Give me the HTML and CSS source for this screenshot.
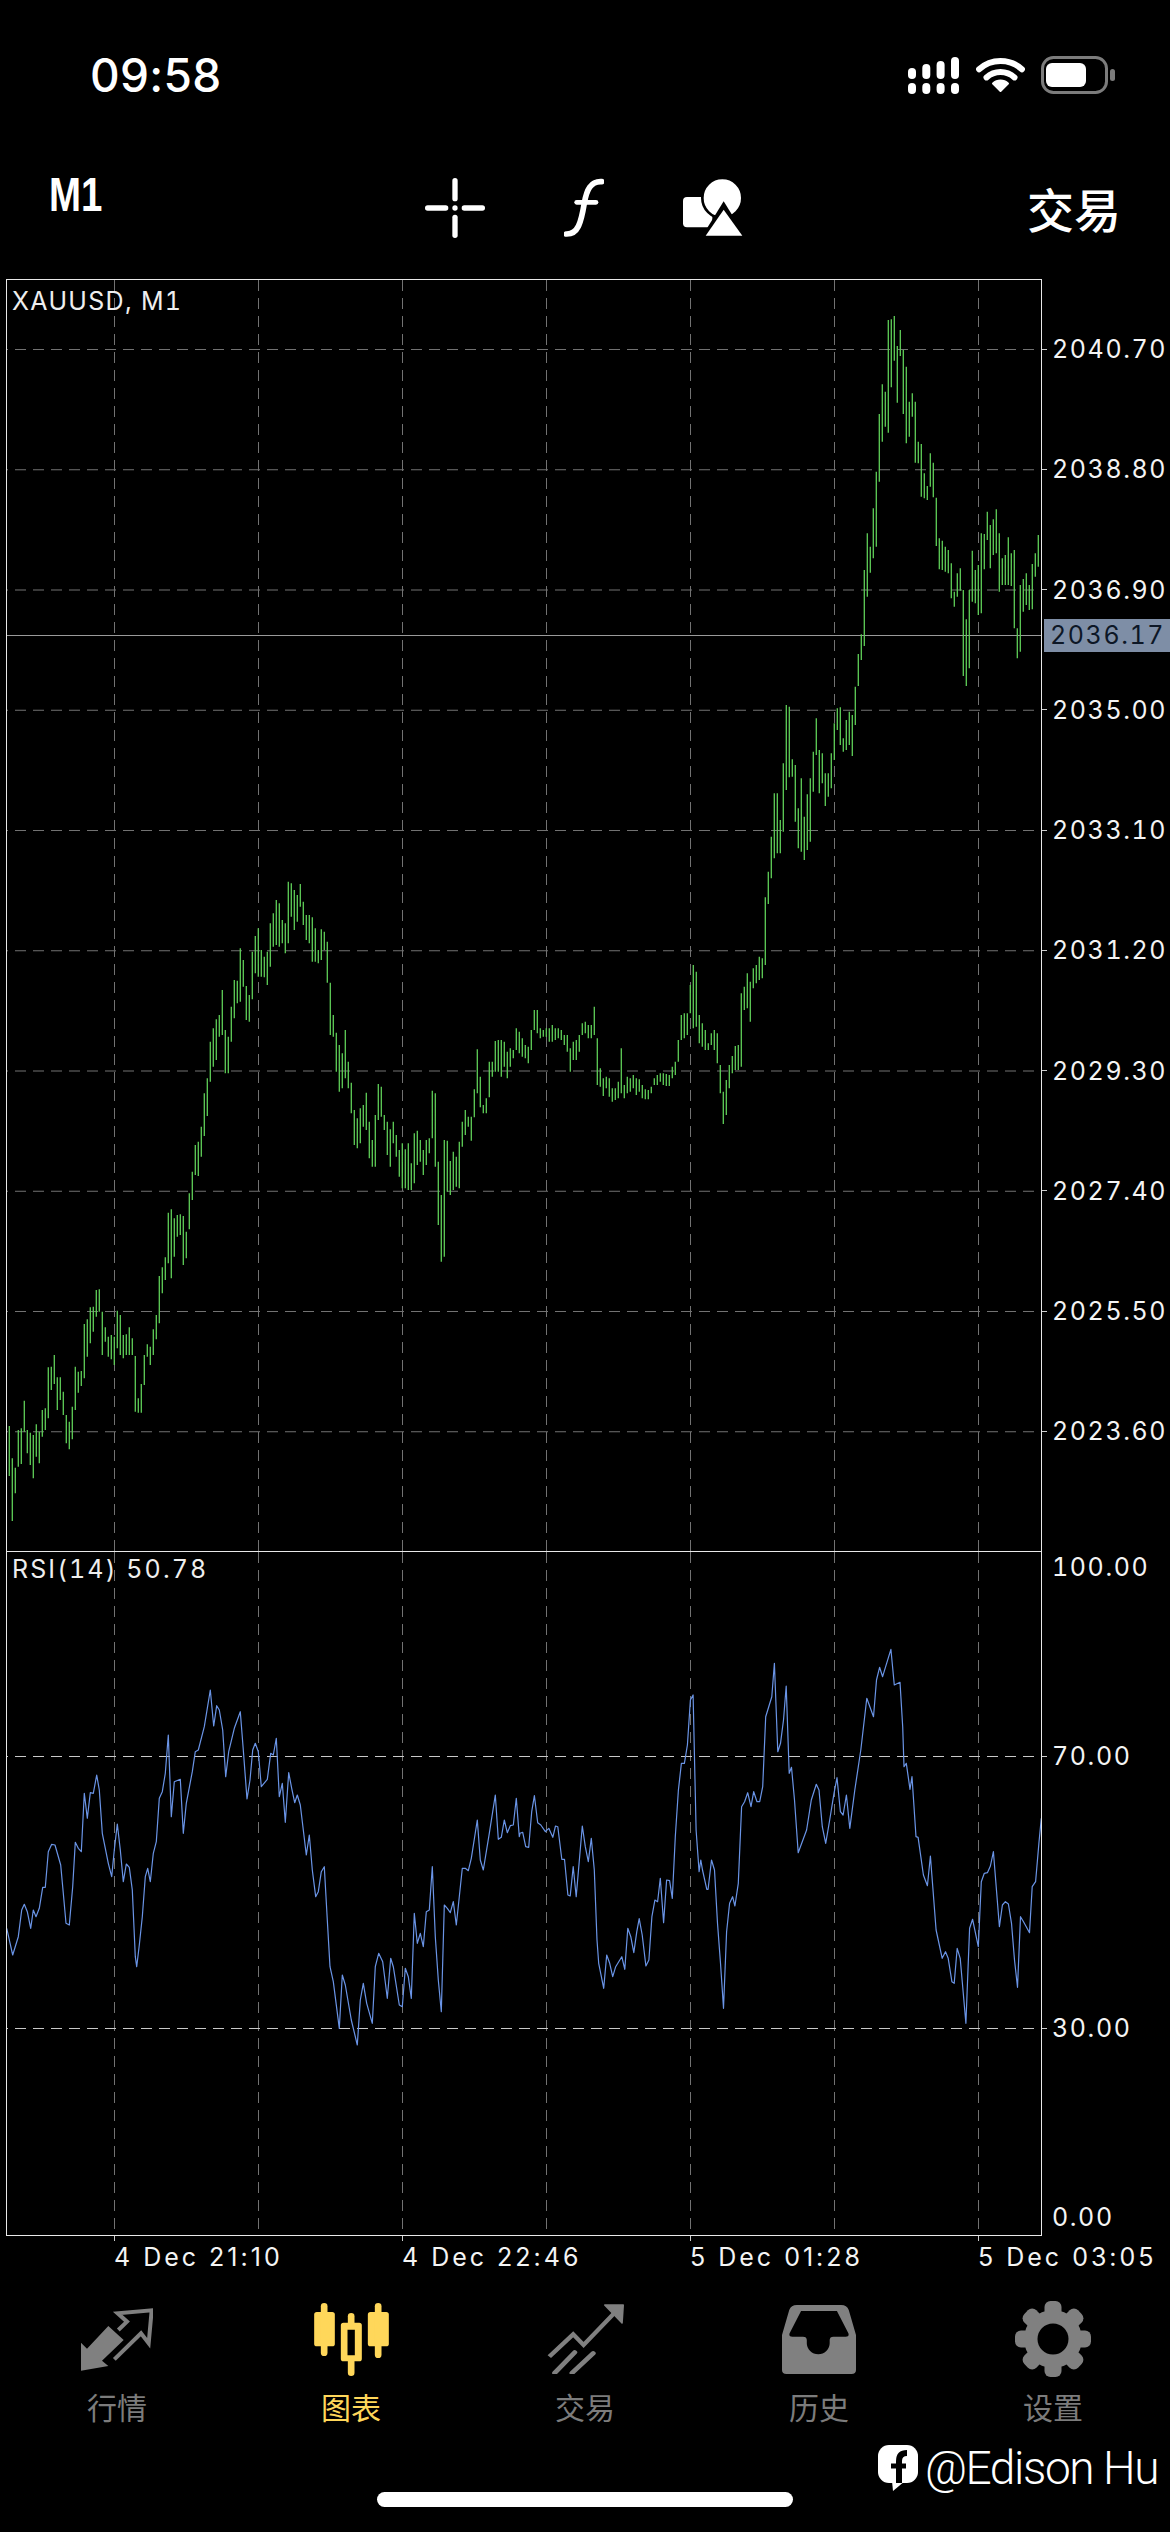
FILE: index.html
```html
<!DOCTYPE html>
<html>
<head>
    <title>XAUUSD, M1</title>
    <link rel="stylesheet" href="styles.css">
</head>
<body>
    <div class="status">
        <div class="time">09:58</div>
        <div class="status-icons">
            <svg width="52" height="37" viewBox="0 0 52 37" fill="#fff">
                <rect x="0" y="11" width="8" height="11" rx="4"/>
                <rect x="14.3" y="7" width="8" height="15" rx="4"/>
                <rect x="28.6" y="4" width="8" height="18" rx="4"/>
                <rect x="43" y="0" width="8" height="22" rx="4"/>
                <rect x="0" y="26" width="8" height="11" rx="4"/>
                <rect x="14.3" y="26" width="8" height="11" rx="4"/>
                <rect x="28.6" y="26" width="8" height="11" rx="4"/>
                <rect x="43" y="26" width="8" height="11" rx="4"/>
            </svg>
            <svg width="49" height="36" viewBox="0 0 49 36" fill="none" stroke="#fff">
                <path d="M3.1 12.2A32 32 0 0 1 45.9 12.2" stroke-width="6" stroke-linecap="round"/>
                <path d="M10.5 20.4A21 21 0 0 1 38.5 20.4" stroke-width="6" stroke-linecap="round"/>
                <path d="M24.5 34L17 26.5A11 11 0 0 1 32 26.5Z" fill="#fff" stroke-width="2" stroke-linejoin="round"/>
            </svg>
            <svg width="74" height="38" viewBox="0 0 74 38">
                <rect x="1.5" y="1.5" width="64" height="35" rx="11" fill="none" stroke="#7c7c7c" stroke-width="3"/>
                <rect x="5" y="7" width="40" height="24" rx="6" fill="#fff"/>
                <rect x="69" y="13" width="5" height="12" rx="2.5" fill="#7c7c7c"/>
            </svg>
        </div>
    </div>

    <div class="toolbar">
        <div class="period"><span>M1</span></div>
        <div class="tools">
            <svg width="60" height="60" viewBox="75 35 180 180" fill="#fff">
                <rect x="75" y="117" width="70" height="16" rx="8"/>
                <rect x="185" y="117" width="70" height="16" rx="8"/>
                <rect x="157" y="35" width="16" height="70" rx="8"/>
                <rect x="157" y="145" width="16" height="70" rx="8"/>
                <circle cx="165" cy="125" r="8"/>
            </svg>
            <svg width="40" height="60" viewBox="490 35 120 180" fill="none" stroke="#fff" stroke-linecap="round">
                <path d="M603 46C570 44 558 70 551 110C541 170 532 204 497 203" stroke-width="17"/>
                <path d="M528 108H586" stroke-width="14"/>
            </svg>
            <svg width="60" height="60" viewBox="850 35 180 180" fill="#fff">
                <rect x="850" y="92" width="88" height="91" rx="12"/>
                <circle cx="968" cy="95" r="60" stroke="#000" stroke-width="8"/>
                <path d="M972 105L1040 215H904Z" fill="#000"/>
                <path d="M972 130L1028 208H918Z"/>
            </svg>
        </div>
        <div class="trade">交易</div>
    </div>

    <div class="chart">
        <div class="panes">
            <div class="pane pane-main">
                <svg id="price" class="plot" viewBox="7 280 1034 1271"></svg>
                <div class="pane-title title-main">XAUUSD, M1</div>
            </div>
            <div class="pane pane-rsi">
                <svg id="rsi" class="plot" viewBox="7 1552 1034 683"></svg>
                <div class="pane-title title-rsi">RSI(14) 50.78</div>
            </div>
        </div>
        <div class="axis">
            <div class="axis-main">
                <div class="level">2040.70</div>
                <div class="level">2038.80</div>
                <div class="level">2036.90</div>
                <div class="level">2035.00</div>
                <div class="level">2033.10</div>
                <div class="level">2031.20</div>
                <div class="level">2029.30</div>
                <div class="level">2027.40</div>
                <div class="level">2025.50</div>
                <div class="level">2023.60</div>
                <div class="price-tag">2036.17</div>
            </div>
            <div class="axis-rsi">
                <div class="level no-tick">100.00</div>
                <div class="level rsi-70">70.00</div>
                <div class="level rsi-30">30.00</div>
                <div class="level no-tick rsi-0">0.00</div>
            </div>
        </div>
    </div>

    <div class="time-axis">
        <div class="stamp">4 Dec 21:10</div>
        <div class="stamp">4 Dec 22:46</div>
        <div class="stamp">5 Dec 01:28</div>
        <div class="stamp">5 Dec 03:05</div>
    </div>

    <div class="tabs">
        <div class="tab">
            <div class="tab-icon">
                <svg width="72" height="63" viewBox="240 325 216 187">
                    <path d="M240 428L258 446L322 378L368 420L303 482L322 498L240 512Z" fill="#808080"/>
                    <path d="M340 478L420 400L443 430L452 331L350 340L378 365L352 390" fill="none" stroke="#808080" stroke-width="12"/>
                </svg>
            </div>
            <div class="tab-label">行情</div>
        </div>
        <div class="tab active">
            <div class="tab-icon">
                <svg width="75" height="73" viewBox="940 308 224 219" fill="#ffd75a">
                    <rect x="940" y="335" width="62" height="103" rx="8"/>
                    <rect x="960" y="308" width="20" height="159" rx="10"/>
                    <rect x="1101" y="335" width="63" height="103" rx="8"/>
                    <rect x="1122" y="308" width="20" height="165" rx="10"/>
                    <path fill-rule="evenodd" d="M1028 367H1075Q1083 367 1083 375V475Q1083 483 1075 483H1061V517A10 10 0 0 1 1041 517V483H1028Q1020 483 1020 475V375Q1020 367 1028 367ZM1040 388V465H1062V388Z"/>
                    <rect x="1041" y="338" width="20" height="40" rx="10"/>
                </svg>
            </div>
            <div class="tab-label">图表</div>
        </div>
        <div class="tab">
            <div class="tab-icon">
                <svg width="77" height="70" viewBox="70 55 200 210" preserveAspectRatio="none">
                    <path d="M76 213L138 146L165 178L245 82" fill="none" stroke="#808080" stroke-width="12"/>
                    <path d="M220 58H268L265 112Z" fill="#808080" stroke="#808080" stroke-width="4" stroke-linejoin="round"/>
                    <path d="M90 262L142 200M135 262L190 203" fill="none" stroke="#808080" stroke-width="13" stroke-linecap="round"/>
                </svg>
            </div>
            <div class="tab-label">交易</div>
        </div>
        <div class="tab">
            <div class="tab-icon">
                <svg width="74" height="69" viewBox="683 60 194 207" preserveAspectRatio="none">
                    <path fill="#808080" fill-rule="evenodd" d="M722 60H838Q853 60 858 75L877 150V255Q877 267 865 267H695Q683 267 683 255V150L702 75Q707 60 722 60ZM733 78L703 145Q700 155 710 155H738Q748 155 748 165V175A30 33 0 0 0 808 175V165Q808 155 818 155H850Q860 155 857 145L827 78Z"/>
                </svg>
            </div>
            <div class="tab-label">历史</div>
        </div>
        <div class="tab">
            <div class="tab-icon">
                <svg width="76" height="76" viewBox="-38 -38 76 76" fill="#808080">
                    <rect x="-8.5" y="-38" width="17" height="16" rx="6"/>
                    <rect x="-8.5" y="-38" width="17" height="16" rx="6" transform="rotate(45)"/>
                    <rect x="-8.5" y="-38" width="17" height="16" rx="6" transform="rotate(90)"/>
                    <rect x="-8.5" y="-38" width="17" height="16" rx="6" transform="rotate(135)"/>
                    <rect x="-8.5" y="-38" width="17" height="16" rx="6" transform="rotate(180)"/>
                    <rect x="-8.5" y="-38" width="17" height="16" rx="6" transform="rotate(225)"/>
                    <rect x="-8.5" y="-38" width="17" height="16" rx="6" transform="rotate(270)"/>
                    <rect x="-8.5" y="-38" width="17" height="16" rx="6" transform="rotate(315)"/>
                    <circle r="29"/>
                    <circle r="15.5" fill="#000"/>
                </svg>
            </div>
            <div class="tab-label">设置</div>
        </div>
    </div>

    <div class="watermark">
        <svg width="41" height="46" viewBox="0 0 41 46">
            <rect x="0" y="0" width="40" height="38" rx="11" fill="#fff"/>
            <path d="M14 36L15 46L27 36Z" fill="#fff"/>
            <path d="M29 8Q21 8 21 16V38" fill="none" stroke="#000" stroke-width="6"/>
            <path d="M13 21H28" stroke="#000" stroke-width="5"/>
        </svg>
        <span>@Edison Hu</span>
    </div>
    <div class="home-bar"></div>

    <script src="chart.js"></script>
</body>
</html>
```

FILE: styles.css
```css
* {
    box-sizing: border-box;
}

body {
    margin: 0;
    width: 1170px;
    height: 2532px;
    overflow: hidden;
    background-color: #000;
    color: #fff;
    font-family: Inter, "Liberation Sans", sans-serif;
}

.status {
    height: 150px;
    display: flex;
    align-items: center;
    justify-content: space-between;
    padding: 0 55px 0 90px;
}

.time {
    font-size: 46px;
    font-weight: 500;
    letter-spacing: 0.3px;
}

.status-icons {
    display: flex;
    align-items: center;
    gap: 16px;
}

.toolbar {
    height: 129px;
    display: flex;
    align-items: center;
    padding: 0 49px 14px 49px;
}

.period {
    width: 376px;
    margin-bottom: 26px;
    font-family: "Liberation Sans", sans-serif;
    font-size: 48px;
    font-weight: bold;
}

.period span {
    display: inline-block;
    transform: scaleX(0.8);
    transform-origin: left;
}

.tools {
    display: flex;
    align-items: center;
    gap: 79px;
}

.trade {
    margin-left: auto;
    font-family: "Noto Sans CJK SC", sans-serif;
    font-size: 47px;
    font-weight: 500;
    line-height: 50px;
}

.chart {
    display: flex;
}

.panes {
    width: 1036px;
    margin-left: 6px;
    border: 1px solid #e8e8e8;
    border-bottom: none;
}

.pane {
    position: relative;
    border-bottom: 1px solid #e8e8e8;
    overflow: hidden;
}

.pane-main {
    height: 1272px;
}

.pane-rsi {
    height: 684px;
}

.plot {
    position: absolute;
    left: 0;
    top: 0;
    width: 1034px;
}

.pane-main .plot {
    height: 1271px;
}

.pane-rsi .plot {
    height: 683px;
}

.grid {
    stroke: #727272;
    stroke-width: 1;
    stroke-dasharray: 11 7;
}

.grid-bright {
    stroke: #c8c8c8;
    stroke-width: 1;
    stroke-dasharray: 11 7;
}

.last-price {
    stroke: #9a9a9a;
    stroke-width: 1;
}

.bars {
    stroke: #5fce58;
    stroke-width: 1.3;
}

.rsi-line {
    stroke: #6a94e6;
    stroke-width: 1.2;
    stroke-linejoin: round;
}

.pane-title {
    position: absolute;
    left: 5px;
    font-size: 25px;
    font-variant-numeric: tabular-nums;
    line-height: 30px;
    color: #eee;
}

.title-main {
    top: 6px;
    letter-spacing: 1.3px;
}

.title-rsi {
    top: 2px;
    letter-spacing: 2.1px;
}

.axis {
    flex: 1;
    font-size: 25px;
    font-variant-numeric: tabular-nums;
    letter-spacing: 1.6px;
    color: #f4f4f4;
}

.axis-main {
    position: relative;
    height: 1272px;
    padding-top: 10px;
}

.level {
    height: 120.25px;
    display: flex;
    align-items: center;
    gap: 5px;
}

.level::before {
    content: "";
    width: 5px;
    height: 1px;
    background-color: #ccc;
}

.level.no-tick::before {
    background-color: transparent;
}

.price-tag {
    position: absolute;
    left: 2px;
    top: 340px;
    width: 126px;
    height: 33px;
    padding-left: 6px;
    line-height: 33px;
    background-color: #7e8ea6;
    color: #0d1726;
}

.axis-rsi .level {
    height: 30px;
}

.axis-rsi {
    padding-top: 1px;
}

.rsi-70 {
    margin-top: 159px;
}

.rsi-30 {
    margin-top: 242px;
}

.rsi-0 {
    margin-top: 159px;
}

.time-axis {
    height: 65px;
    display: flex;
    padding-left: 114px;
    font-size: 25px;
    letter-spacing: 3px;
    color: #f4f4f4;
}

.stamp {
    flex: none;
    width: 288px;
    line-height: 30px;
}

.stamp:last-child {
    width: auto;
}

.stamp::before {
    content: "";
    display: block;
    width: 1px;
    height: 5px;
    margin-bottom: 1px;
    background-color: #ccc;
}

.tabs {
    display: flex;
}

.tab {
    flex: 1;
    display: flex;
    flex-direction: column;
    align-items: center;
    gap: 9px;
    color: #7c7c7c;
}

.tab.active {
    color: #ffd75a;
}

.tab-icon {
    height: 76px;
    display: flex;
    align-items: center;
}

.tab-label {
    font-family: "Noto Sans CJK SC", sans-serif;
    font-size: 30px;
    line-height: 40px;
}

.watermark {
    height: 48px;
    margin-top: 18px;
    display: flex;
    justify-content: flex-end;
    align-items: center;
    gap: 6px;
    padding-right: 12px;
    font-family: Roboto, sans-serif;
    font-size: 46px;
    font-weight: 300;
    letter-spacing: -1.4px;
}

.home-bar {
    width: 416px;
    height: 15px;
    margin: 0 auto;
    border-radius: 8px;
    background-color: #fff;
}
```

FILE: chart.js
```js
// traced from the chart: [first bar, y of the top of the crop, top, bottom, top, bottom...]
// values are in 1/3 px
const barRows = [
    [0, 1240, [558,708, 655,843, 683,760, 570,680, 565,672, 482,575, 570,640, 578,675, 585,715, 553,650, 575,670, 510,590, 505,570,
        382,535, 380,450, 345,432, 412,510, 412,480, 455,525, 525,610, 545,628, 500,598, 380,510, 395,458, 393,438, 252,415, 238,350,
        202,310, 200,275, 150,230, 148,215, 215,345, 262,305, 290,350, 285,358, 290,375, 212,325, 225,345, 285,355, 283,345, 262,345,
        295,345, 348,515, 475,518, 432,518, 345,435, 313,350, 320,375, 268,345, 225,298, 108,250, 82,160, 52,120]],
    [53, 860, [1058,1210, 1048,1255, 1075,1190, 1065,1130, 1063,1125, 1068,1215, 1115,1195, 1000,1108, 935,1020, 855,945, 845,948,
        800,890, 700,828, 655,768, 545,665, 505,620, 478,600, 465,530, 390,525, 510,640, 530,640, 440,545, 360,475, 362,430, 265,425,
        300,380, 378,480, 405,485, 275,418, 228,340, 205,350, 270,350, 290,352, 275,375, 190,320, 160,260, 120,255, 130,260, 180,250,
        190,280, 65,250, 70,170, 90,210, 105,185, 72,140, 125,195, 165,240, 165,250, 172,305, 205,305, 270,310, 208,300, 215,270,
        245,368, 368,525, 465,530, 518,635, 555,695, 580,685, 510,655, 605,685, 668,760, 750,855, 775,865, 745,850, 735,800, 698,810,
        785,895, 840,920, 765,920, 672,780, 680,770, 765,810, 785,885, 808,920, 785,850, 825,890, 870,950, 850,985, 868,985, 850,990,
        910,990, 820,970, 812,915, 840,905, 870,945, 840,915, 835,880, 692,835, 700,920, 905,1095, 1005,1205, 840,1190, 842,995,
        903,1005, 875,990, 890,980, 845,985, 785,860, 750,825, 770,800, 770,842, 688,772, 568,700, 650,742, 735,760, 715,760, 605,712,
        605,650, 543,635, 540,635]],
    [164, 680, [1080,1190, 1085,1160, 1115,1195, 1105,1160, 1110,1135, 1045,1110, 1055,1120, 1075,1130, 1095,1135, 1100,1150,
        1050,1110, 990,1050, 990,1060, 1045,1075, 1050,1070, 1045,1070, 1045,1085, 1035,1085, 1045,1080, 1045,1075, 1050,1080,
        1065,1095, 1065,1115, 1105,1175, 1085,1140, 1080,1140, 1065,1115, 1030,1065, 1025,1060, 1035,1075, 1035,1075, 980,1065,
        1075,1215, 1165,1220, 1195,1248, 1190,1225, 1195,1250, 1225,1265, 1225,1260, 1205,1255, 1105,1240, 1215,1255, 1190,1240,
        1195,1235, 1185,1225, 1195,1245, 1198,1235, 1215,1255, 1228,1258, 1230,1258, 1220,1240, 1195,1215, 1185,1215, 1180,1205,
        1180,1215, 1182,1218, 1185,1218, 1160,1195, 1145,1185, 1080,1145, 1005,1080, 1000,1075, 1000,1065, 915,1000, 855,1045,
        875,1040, 1005,1090, 1030,1100, 1050,1110, 1090,1110, 1060,1095, 1050,1110, 1060,1150, 1155,1240, 1235,1332, 1200,1305,
        1155,1225, 1128,1180, 1098,1170, 1095,1170, 940,1160, 920,990, 880,985, 905,1025, 865,925, 855,910, 830,900, 835,895,
        652,855, 575,672, 470,595, 340,535, 340,520, 420,520, 250,455, 75,330, 80,292, 238,290, 255,425, 385,505, 295,515, 410,540,
        343,510, 295,485, 215,335, 115,225, 210,340, 220,310, 280,378, 280,350, 220,325, 130,240, 85,150, 82,195, 175,215, 120,210,
        95,195, 105,228, 20,135]],
    [283, 280, [1122,1218, 1063,1140, 870,1098, 760,950, 800,878, 685,835, 575,800, 402,605, 313,485, 335,440, 120,458, 118,322,
        108,242, 198,368, 150,228, 210,402, 260,490, 365,470, 340,410, 365,548, 485,550, 492,650, 580,655, 618,660, 520,620, 548,652,
        653,798, 775,868, 782,870, 800,875, 810,880, 850,955, 935,980, 880,950, 865,932, 930,1188, 1018,1218, 930,1165, 812,965,
        870,970, 855,1005, 760,1000, 762,868, 695,780, 735,865, 718,825, 688,820, 760,935, 835,915, 825,915, 772,915, 820,918,
        810,1045, 1045,1135, 915,1115, 897,995, 880,975, 915,990, 852,988, 820,890, 765,860]]
];

// [left of the crop, top of the crop, x scale, x, y, x, y...]
const rsiRows = [
    [0, 1660, 3, [20,805, 38,885, 55,830, 65,750, 73,733, 82,755, 92,805, 100,750, 108,770, 118,745, 128,682, 136,682, 145,575, 155,553,
        165,555, 182,615, 190,700, 198,790, 208,795, 218,680, 226,547, 235,565, 244,575, 253,400, 262,475, 271,398, 280,400, 290,345,
        298,390, 307,520, 325,610, 335,650, 343,570, 352,492, 361,570, 370,665, 379,612, 388,622, 397,690, 406,890, 410,920, 418,855,
        427,770, 436,650, 443,625, 451,665, 460,580, 469,545, 478,415, 487,395, 496,340, 505,225, 514,470, 523,365, 541,358, 550,520,
        559,430, 577,335, 586,275, 595,270, 613,200, 631,90, 641,198, 650,137, 658,150, 668,210, 677,350, 686,275, 703,205, 721,155,
        730,270, 741,417, 750,360, 758,270, 766,250, 775,275, 784,380, 802,358, 812,280, 820,285, 829,235, 838,410, 847,370, 856,487,
        866,338, 875,385, 884,428, 892,405, 901,435, 910,510, 919,585, 928,525, 937,630, 947,710, 955,695, 964,635, 973,620, 982,780,
        990,920, 1000,965, 1018,1105, 1027,945, 1036,975, 1054,1080, 1072,1155, 1081,1020, 1090,970, 1100,1030, 1117,1090, 1126,920,
        1136,880, 1148,905, 1162,1015, 1172,895, 1180,920, 1198,1035, 1207,1040, 1216,925, 1225,950, 1234,1015, 1243,760, 1252,850,
        1261,820, 1270,860, 1279,755, 1288,750, 1297,620, 1306,830, 1315,960, 1324,1055, 1333,735, 1342,745, 1351,758, 1360,725,
        1369,795, 1387,625, 1396,625, 1405,632, 1414,595, 1432,480, 1441,600, 1450,630, 1468,520, 1486,405, 1495,538, 1504,532,
        1513,480, 1522,518, 1531,497, 1540,495, 1549,415, 1558,530]],
    [520, 1630, 2.987, [0,610, 8,607, 17,650, 26,652, 35,545, 43,497, 53,578, 62,585, 76,605, 86,595, 98,622, 106,588, 113,590, 125,688,
        133,688, 143,795, 150,798, 159,710, 168,800, 186,588, 195,650, 204,695, 213,625, 222,720, 230,930, 235,1000, 250,1075, 259,975,
        268,1000, 277,1040, 286,1010, 304,980, 313,1018, 322,895, 331,920, 340,968, 349,905, 356,866, 365,915, 376,1008, 385,990,
        394,860, 403,810, 411,815, 419,745, 429,878, 438,750, 447,752, 455,805, 464,620, 473,480, 482,400, 491,400, 500,345, 509,210,
        517,195, 526,600, 535,725, 540,690, 545,720, 558,778, 562,778, 572,690, 581,720, 590,880, 599,1000, 608,1135, 617,905, 626,820,
        635,800, 642,828, 652,760, 662,530, 671,515, 680,488, 690,530, 698,485, 708,515, 716,515, 725,470, 734,260, 752,200, 760,100,
        770,365, 778,340, 787,270, 795,168, 804,430, 811,412, 820,510, 831,668, 856,600, 870,510, 885,463, 893,480, 903,590, 913,640,
        925,570, 938,490, 947,443, 957,545, 965,555, 975,495, 985,595, 1000,480, 1018,360, 1036,205, 1056,260, 1065,150, 1074,112,
        1083,140, 1108,58, 1118,165, 1135,157, 1143,290, 1147,410, 1154,400, 1165,478, 1171,440, 1183,620, 1189,622, 1205,735, 1217,767,
        1226,678, 1243,900, 1261,985, 1271,965, 1279,985, 1290,1055, 1297,1060, 1306,955, 1315,985, 1332,1180, 1343,895, 1352,868,
        1369,950, 1378,755, 1387,730, 1396,728, 1405,708, 1414,665, 1432,890, 1441,825, 1450,815, 1459,822, 1468,880, 1477,990,
        1486,1072, 1495,860, 1504,875, 1522,908, 1530,770, 1540,755, 1550,640, 1557,565]]
];

function addPath(svg, d, cls) {
    const path = document.createElementNS("http://www.w3.org/2000/svg", "path");
    path.setAttribute("d", d);
    path.setAttribute("fill", "none");
    path.setAttribute("class", cls);
    svg.appendChild(path);
}

function verticals(top, bottom) {
    let d = "";
    for (let x = 114.5; x < 1041; x += 144) {
        d += `M${x} ${top}V${bottom}`;
    }
    return d;
}

function horizontals(levels) {
    return levels.map(y => `M-3 ${y}H1041`).join("");
}

const price = document.getElementById("price");
const priceLevels = [];
for (let i = 0; i < 10; i++) {
    priceLevels.push(349.5 + i * 120.25);
}
addPath(price, verticals(280, 1551), "grid");
addPath(price, horizontals(priceLevels), "grid");
addPath(price, "M7 635.5H1041", "last-price");

let bars = "";
barRows.forEach(([first, top, values]) => {
    for (let i = 0; i < values.length; i += 2) {
        const x = 9.3 + 3 * (first + i / 2);
        bars += `M${x.toFixed(1)} ${(top + values[i] / 3).toFixed(1)}V${(top + values[i + 1] / 3).toFixed(1)}`;
    }
});
addPath(price, bars, "bars");

const rsi = document.getElementById("rsi");
addPath(rsi, verticals(1552, 2235), "grid");
addPath(rsi, horizontals([1756.5, 2028.5]), "grid-bright");

let line = "";
rsiRows.forEach(([left, top, scale, values]) => {
    for (let i = 0; i < values.length; i += 2) {
        line += `${line ? "L" : "M"}${(left + values[i] / scale).toFixed(1)} ${(top + values[i + 1] / 3).toFixed(1)}`;
    }
});
addPath(rsi, line, "rsi-line");
```
